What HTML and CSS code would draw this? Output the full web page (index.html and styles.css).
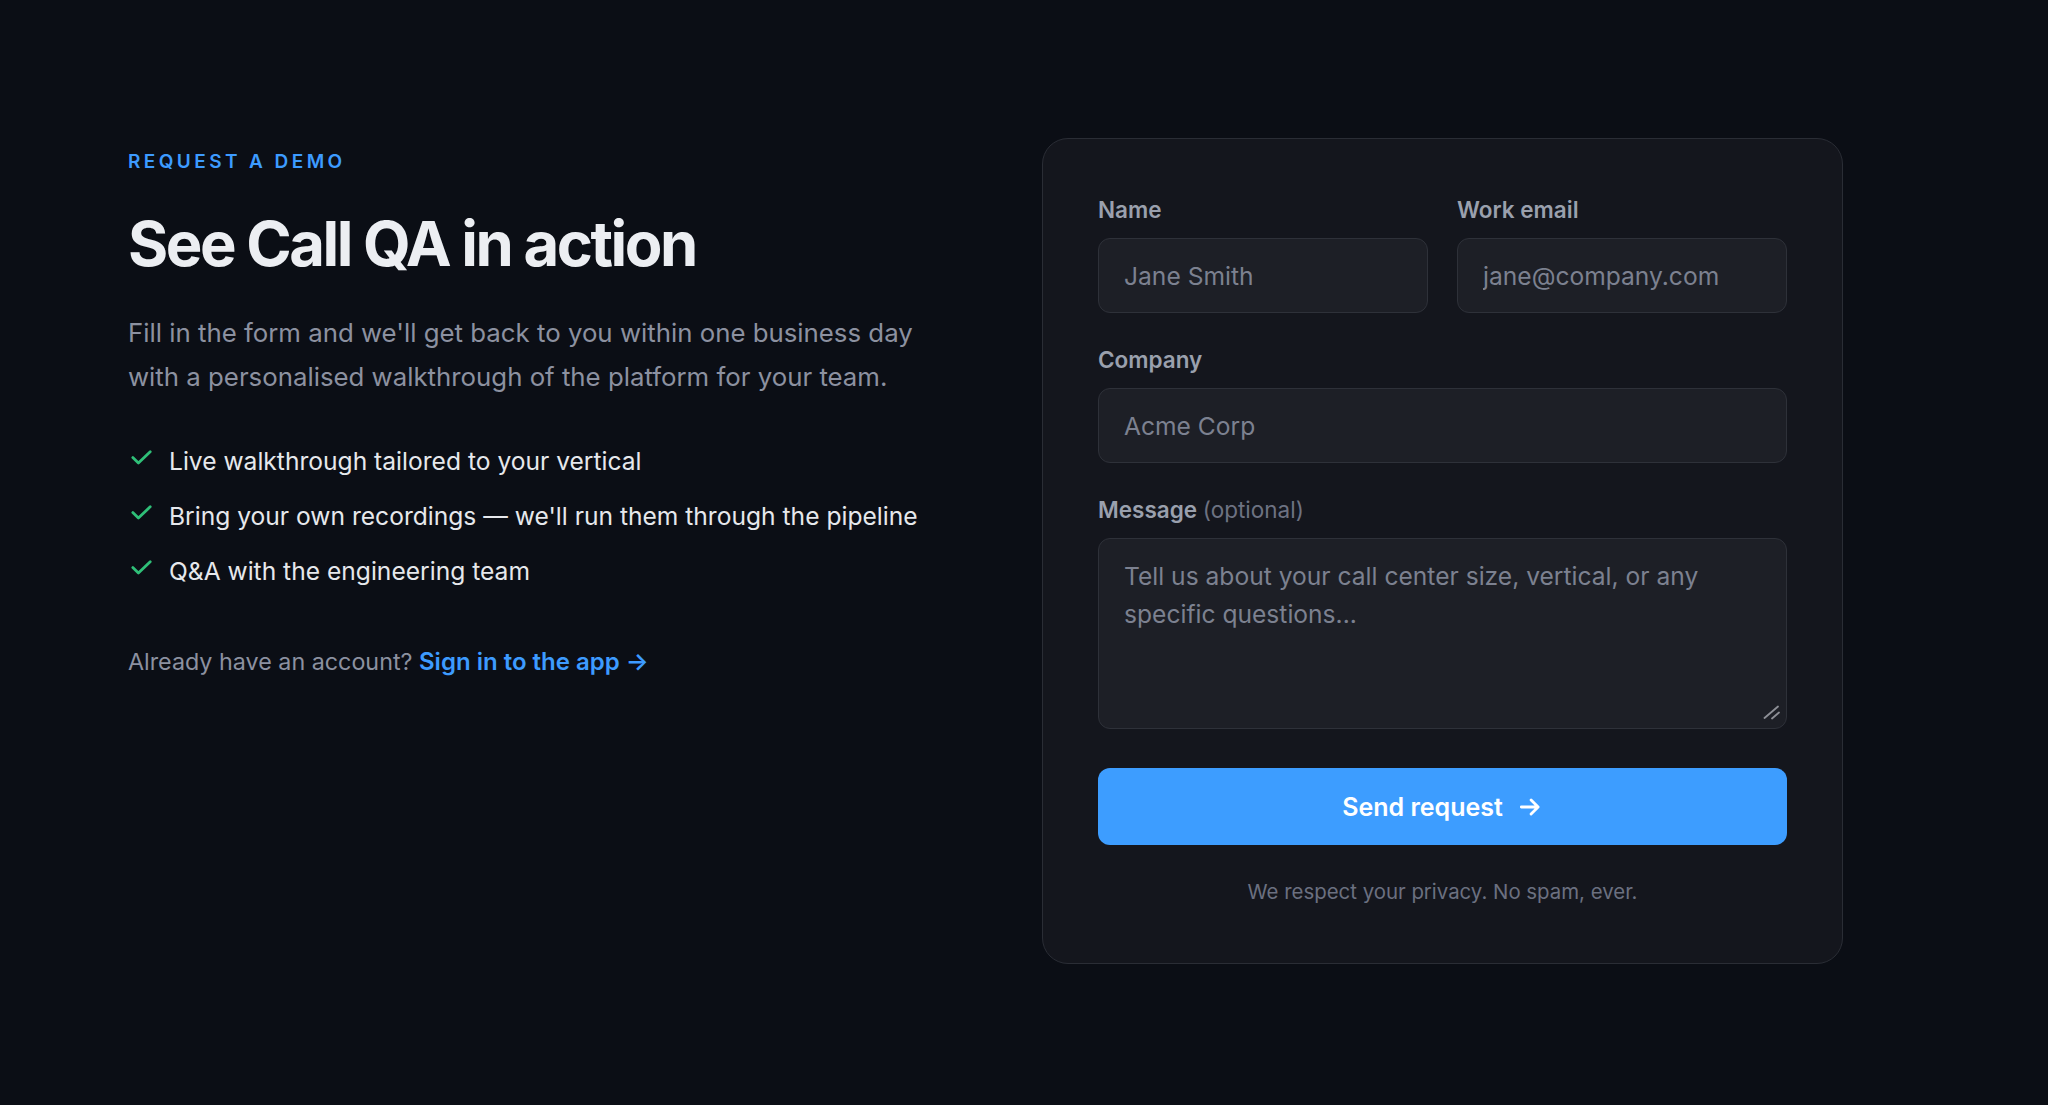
FILE: index.html
```html
<!DOCTYPE html>
<html lang="en">
<head>
<meta charset="utf-8">
<title>Request a demo</title>
<link rel="stylesheet" href="styles.css">
</head>
<body>
<main class="page">
  <section class="intro">
    <p class="eyebrow">REQUEST A DEMO</p>
    <h1 class="title">See Call QA in action</h1>
    <p class="lead">Fill in the form and we'll get back to you within one business day with a personalised walkthrough of the platform for your team.</p>
    <ul class="checks">
      <li class="check-item">
        <svg class="check-icon" viewBox="0 0 21 15" aria-hidden="true"><path d="M1.8 7.6l5.6 5.4L19.2 1.8"/></svg>
        <span>Live walkthrough tailored to your vertical</span>
      </li>
      <li class="check-item">
        <svg class="check-icon" viewBox="0 0 21 15" aria-hidden="true"><path d="M1.8 7.6l5.6 5.4L19.2 1.8"/></svg>
        <span>Bring your own recordings — we'll run them through the pipeline</span>
      </li>
      <li class="check-item">
        <svg class="check-icon" viewBox="0 0 21 15" aria-hidden="true"><path d="M1.8 7.6l5.6 5.4L19.2 1.8"/></svg>
        <span>Q&amp;A with the engineering team</span>
      </li>
    </ul>
    <p class="signin">Already have an account? <a class="signin-link" href="#">Sign in to the app →</a></p>
  </section>

  <form class="card">
    <div class="row">
      <label class="field">
        <span class="label">Name</span>
        <input class="input" type="text" placeholder="Jane Smith">
      </label>
      <label class="field">
        <span class="label">Work email</span>
        <input class="input" type="email" placeholder="jane@company.com">
      </label>
    </div>
    <label class="field">
      <span class="label">Company</span>
      <input class="input" type="text" placeholder="Acme Corp">
    </label>
    <label class="field">
      <span class="label">Message <span class="optional">(optional)</span></span>
      <span class="textarea-wrap">
        <textarea class="input textarea" placeholder="Tell us about your call center size, vertical, or any specific questions..."></textarea>
        <svg class="grip" viewBox="0 0 18 16" aria-hidden="true"><path d="M1.5 14L15 2.5M9 14.5L16 8.5"/></svg>
      </span>
    </label>
    <button class="submit" type="button">
      <span>Send request</span>
      <svg class="submit-arrow" viewBox="0 0 24 24" aria-hidden="true"><path d="M4 12h15M13 5.5l6.5 6.5-6.5 6.5"/></svg>
    </button>
    <p class="privacy">We respect your privacy. No spam, ever.</p>
  </form>
</main>
</body>
</html>
```

FILE: styles.css
```css
* { box-sizing: border-box; }

html, body {
  margin: 0;
  background: #0b0e15;
  color: #e6e8ec;
  font-family: Inter, "Noto Sans", "Liberation Sans", sans-serif;
  color-scheme: dark;
}

.page {
  display: grid;
  grid-template-columns: 1fr 801px;
  column-gap: 60px;
  align-items: start;
  padding: 138px 205px 0 128px;
  min-height: 1105px;
}

.intro {
  padding-top: 12px;
}

.eyebrow {
  margin: 0;
  font-size: 19px;
  line-height: 24px;
  font-weight: 600;
  letter-spacing: 0.18em;
  color: #3d9bff;
}

.title {
  margin: 36px 0 0;
  font-size: 61.5px;
  line-height: 68px;
  font-weight: 700;
  letter-spacing: -0.04em;
  color: #eceef2;
}

.lead {
  margin: 33px 0 0;
  font-size: 25.8px;
  line-height: 44px;
  color: #8c91a0;
  max-width: 820px;
}

.checks {
  list-style: none;
  margin: 44px 0 0;
  padding: 0;
  display: flex;
  flex-direction: column;
  gap: 19px;
}

.check-item {
  display: flex;
  align-items: center;
  gap: 17px;
  font-size: 24.6px;
  line-height: 36px;
  color: #e6e8ec;
}

.check-icon {
  width: 21px;
  height: 15px;
  flex: none;
  margin-left: 3px;
  margin-top: -8px;
  fill: none;
  stroke: #2fbf78;
  stroke-width: 2.8;
  stroke-linecap: round;
  stroke-linejoin: round;
}

.signin {
  margin: 55px 0 0;
  font-size: 23.3px;
  line-height: 36px;
  color: #8c91a0;
}

.signin-link {
  color: #3d9bff;
  font-size: 24px;
  font-weight: 600;
  text-decoration: none;
}

.card {
  background: #14161d;
  border: 1px solid #2a2d35;
  border-radius: 26px;
  padding: 57px 55px 57px;
  display: flex;
  flex-direction: column;
  gap: 33px;
}

.row {
  display: grid;
  grid-template-columns: 1fr 1fr;
  column-gap: 29px;
}

.field {
  display: flex;
  flex-direction: column;
  gap: 14px;
}

.label {
  font-size: 22.5px;
  line-height: 28px;
  font-weight: 600;
  color: #9aa0ad;
}

.optional {
  font-weight: 400;
  color: #6d7282;
}

.input {
  height: 75px;
  width: 100%;
  background: #1d1f26;
  border: 1.5px solid #2e3139;
  border-radius: 12px;
  padding: 0 25px;
  font-family: inherit;
  font-size: 24.6px;
  color: #e6e8ec;
  outline: none;
}

.input::placeholder {
  color: #7c8190;
}

.textarea-wrap {
  position: relative;
  display: block;
}

.textarea {
  display: block;
  height: 191px;
  padding: 18px 25px;
  line-height: 38px;
  resize: none;
}

.grip {
  position: absolute;
  right: 6px;
  bottom: 9px;
  width: 18px;
  height: 16px;
  fill: none;
  stroke: #8d8f96;
  stroke-width: 1.8;
  stroke-linecap: round;
}

.submit {
  margin-top: 6px;
  height: 77px;
  border: none;
  border-radius: 12px;
  background: #3d9dff;
  color: #ffffff;
  font-family: inherit;
  font-size: 25px;
  font-weight: 600;
  display: flex;
  align-items: center;
  justify-content: center;
  gap: 14px;
  cursor: pointer;
}

.submit-arrow {
  width: 26px;
  height: 26px;
  fill: none;
  stroke: #ffffff;
  stroke-width: 2.6;
  stroke-linecap: round;
  stroke-linejoin: round;
}

.privacy {
  margin: 0;
  text-align: center;
  font-size: 20.4px;
  line-height: 28px;
  color: #6b7080;
}
```
